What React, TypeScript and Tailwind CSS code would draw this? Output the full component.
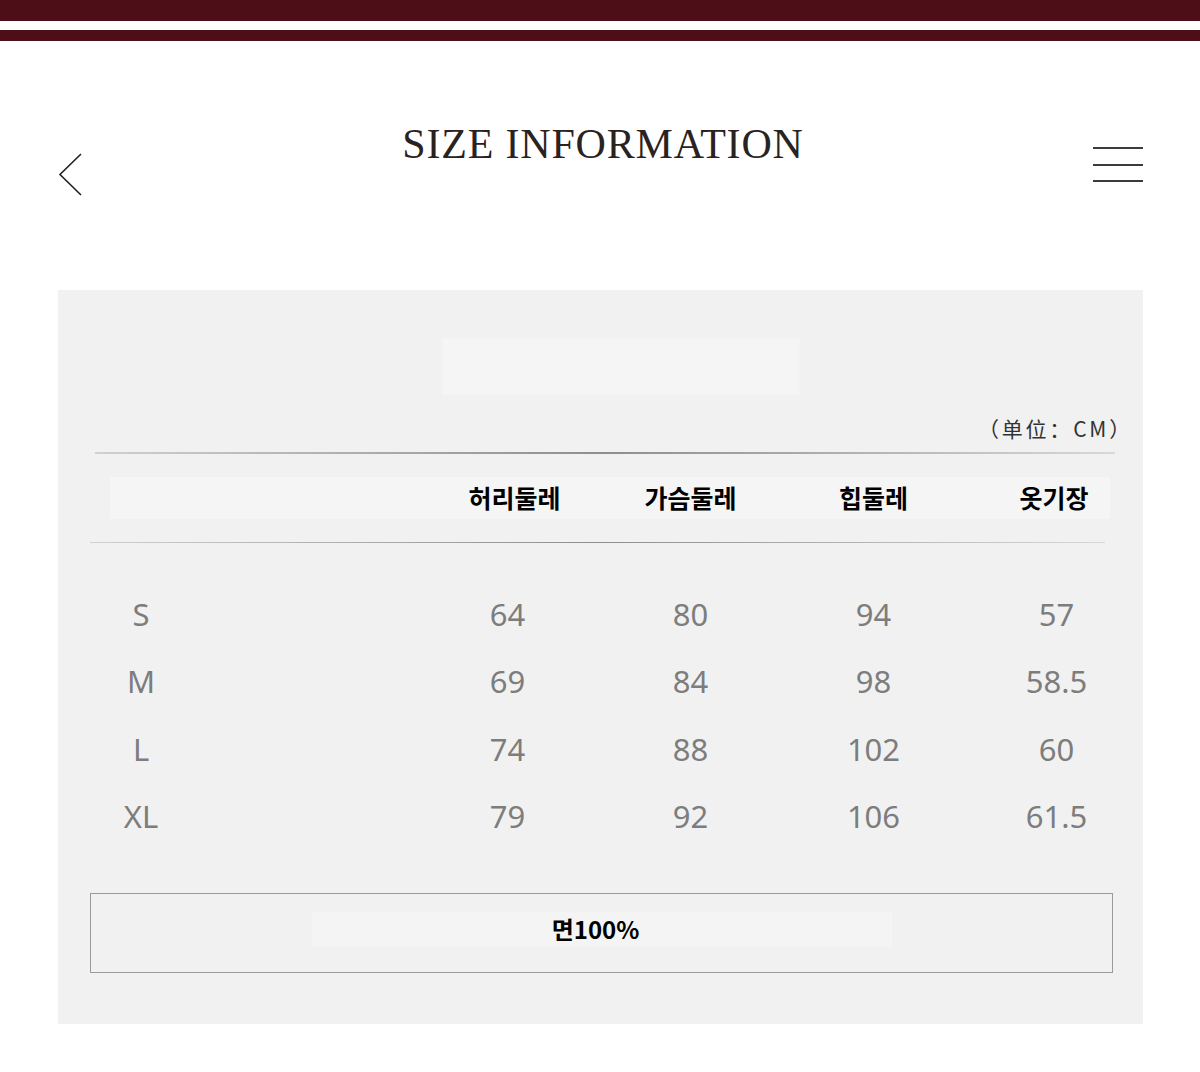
import React from "react";

const sizes = [
	{ label: "S", values: ["64", "80", "94", "57"] },
	{ label: "M", values: ["69", "84", "98", "58.5"] },
	{ label: "L", values: ["74", "88", "102", "60"] },
	{ label: "XL", values: ["79", "92", "106", "61.5"] },
];

const headers = ["허리둘레", "가슴둘레", "힙둘레", "옷기장"];

const ko = { fontFamily: '"Noto Sans CJK KR", "Noto Sans", sans-serif' };
const num = { fontFamily: '"Noto Sans", "Open Sans", sans-serif' };

export default function App() {
	return (
		<div className="w-[1200px] min-h-[1072px] bg-white">
			{/* Top stripes */}
			<div className="h-[21px] bg-[#4d0e17]" />
			<div className="h-[9px] bg-white" />
			<div className="h-[11px] bg-[#4d0e17]" />

			{/* Header */}
			<div className="h-[249px] grid grid-cols-[1fr_auto_1fr] px-[57px]">
				<div className="pt-[112px]">
					<svg width="26" height="44" viewBox="0 0 26 44" fill="none">
						<path d="M24 1 L3 21.5 L24 42" stroke="#222" strokeWidth="1.6" />
					</svg>
				</div>
				<h1
					className="pt-[82px] pl-[6px] text-[42px] leading-none tracking-[0.8px] text-[#2a2220]"
					style={{ fontFamily: '"Liberation Serif", "DejaVu Serif", serif' }}
				>
					SIZE INFORMATION
				</h1>
				<div className="pt-[106px] flex justify-end">
					<div className="w-[50px] flex flex-col gap-[14.5px]">
						<div className="h-[2px] bg-[#3c3c3c]" />
						<div className="h-[2px] bg-[#3c3c3c]" />
						<div className="h-[2px] bg-[#3c3c3c]" />
					</div>
				</div>
			</div>

			{/* Size panel */}
			<div className="ml-[58px] w-[1085px] bg-[#f1f1f1] pt-[48px] pb-[51px]">
				<div className="ml-[384px] w-[358px] h-[57px] bg-[#f5f5f5] blur-[1px]" />

				<div
					className="mt-[19px] pr-[10px] h-[28px] text-right text-[21px] leading-[28px] tracking-[2.8px] text-[#333]"
					style={{ fontFamily: '"Noto Sans CJK SC", "Noto Sans", sans-serif' }}
				>
					（单位：CM）
				</div>

				<div className="mt-[10px] ml-[37px] w-[1020px] h-[1.5px] bg-gradient-to-r from-[#d0d0d0] via-[#8e8e8e] to-[#d8d8d8]" />

				<div className="h-[88px] flex items-center">
					<div className="ml-[52px] w-[1000px] h-[42px] bg-[#f5f5f5] grid grid-cols-[114px_192px_183px_183px_183px_183px] items-center">
						<div />
						<div />
						{headers.map((h, i) => (
							<div
								key={h}
								className={`text-center text-[25px] leading-none font-bold text-black ${i === 0 ? "pl-[14px]" : ""} ${i === 3 ? "pr-[5px]" : ""}`}
								style={ko}
							>
								{h}
							</div>
						))}
					</div>
				</div>

				<div className="ml-[32px] w-[1015px] h-[1.5px] bg-gradient-to-r from-[#d0d0d0] via-[#8e8e8e] to-[#d8d8d8]" />

				<div className="mt-[37px]">
					{sizes.map((row) => (
						<div
							key={row.label}
							className="h-[67.5px] grid grid-cols-[166px_192px_183px_183px_183px_183px] items-center text-[31px] text-[#7d7d7d]"
							style={num}
						>
							<div className="text-center">{row.label}</div>
							<div />
							{row.values.map((v, i) => (
								<div key={i} className="text-center">
									{v}
								</div>
							))}
						</div>
					))}
				</div>

				<div className="mt-[43px] ml-[32px] w-[1023px] h-[80px] border-[1.5px] border-[#9a9a9a] flex items-center justify-center pb-[9px]">
					<div className="w-[580px] h-[34px] bg-[#f4f4f4] flex items-center justify-center pr-[12px]">
						<span className="text-[24px] leading-none font-bold text-black" style={ko}>
							면100%
						</span>
					</div>
				</div>
			</div>
		</div>
	);
}
